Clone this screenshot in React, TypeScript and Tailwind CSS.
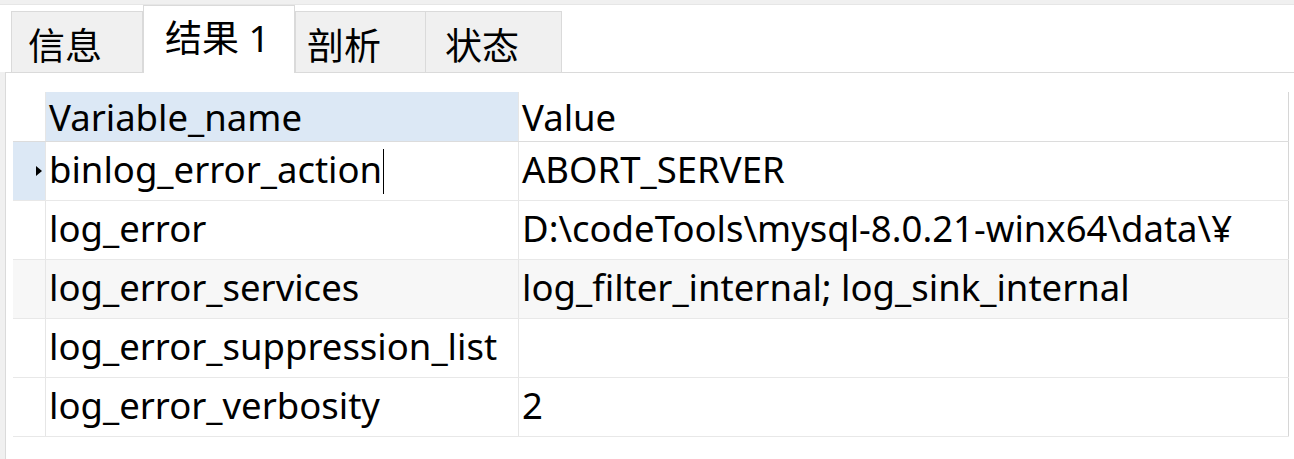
import React from 'react';

const FONT = '"Noto Sans", "Noto Sans CJK SC", sans-serif';

const tabs = [
  { label: '信息', cls: 'w-[132px] pl-[16px]', active: false },
  { label: '结果 1', cls: 'w-[152px] pl-[21px]', active: true },
  { label: '剖析', cls: 'w-[131px] pl-[11px]', active: false },
  { label: '状态', cls: 'w-[137px] pl-[19px] -ml-px', active: false },
];

const rows = [
  { name: 'binlog_error_action', value: 'ABORT_SERVER' },
  { name: 'log_error', value: 'D:\\codeTools\\mysql-8.0.21-winx64\\data\\¥' },
  { name: 'log_error_services', value: 'log_filter_internal; log_sink_internal' },
  { name: 'log_error_suppression_list', value: '' },
  { name: 'log_error_verbosity', value: '2' },
];

export default function App() {
  return (
    <div className="w-[1294px] h-[459px] bg-white text-black overflow-hidden flex flex-col" style={{ fontFamily: FONT }}>
      {/* top band */}
      <div className="h-[5px] bg-[#f0f0f0] border-b border-[#e6e6e6]" />

      {/* tab strip */}
      <div className="h-[67px] flex items-end pl-[11px] bg-white">
        {tabs.map((t) =>
          t.active ? (
            <div
              key={t.label}
              className={`${t.cls} h-[68px] -mb-px relative z-10 bg-white border border-b-0 border-[#dadada] flex items-center pb-[4px] text-[37px] leading-none`}
            >
              {t.label}
            </div>
          ) : (
            <div
              key={t.label}
              className={`${t.cls} h-[61px] bg-[#f0f0f0] border border-b-0 border-[#dadada] flex items-center pt-[6px] text-[37px] leading-none`}
            >
              {t.label}
            </div>
          ),
        )}
      </div>

      {/* content panel */}
      <div className="flex-1 flex bg-[#f0f0f0]">
        <div className="w-[5px]" />
        <div className="flex-1 bg-white border-l border-t border-[#dadada] pl-[7px] pt-[19px] pr-[4px]">
          <div className="w-[1276px] text-[36.5px] leading-none">
            {/* header */}
            <div className="flex h-[50px] border-b border-[#dcdcdc]">
              <div className="w-[33px] border-r border-[#e6e6e6]" />
              <div className="w-[473px] bg-[#dce8f5] border-r border-[#e6e6e6] flex items-center pl-[3px] pt-[2px]">Variable_name</div>
              <div className="flex-1 border-r border-[#d6d6d6] flex items-center pl-[3px] pt-[2px]">Value</div>
            </div>
            {rows.map((r, i) => (
              <div
                key={r.name}
                className={`flex h-[59px] border-b border-[#e8e8e8] ${i === 2 ? 'bg-[#f7f7f7]' : 'bg-white'}`}
              >
                <div
                  className={`w-[33px] border-r border-[#e6e6e6] flex items-center justify-end pr-[3px] ${
                    i === 0 ? 'bg-[#dce8f5]' : ''
                  }`}
                >
                  {i === 0 && (
                    <svg width="6" height="10" viewBox="0 0 6 10">
                      <path d="M0 0 L6 5 L0 10 Z" fill="#000" />
                    </svg>
                  )}
                </div>
                <div className="w-[473px] border-r border-[#e6e6e6] flex items-center pl-[3px] pb-[3px]">
                  <span>{r.name}</span>
                  {i === 0 && <span className="ml-[1px] mt-[3px] w-px h-[45px] bg-black" />}
                </div>
                <div className="flex-1 border-r border-[#d6d6d6] flex items-center pl-[3px] pb-[3px] whitespace-nowrap">
                  {r.value}
                </div>
              </div>
            ))}
          </div>
        </div>
      </div>
    </div>
  );
}
